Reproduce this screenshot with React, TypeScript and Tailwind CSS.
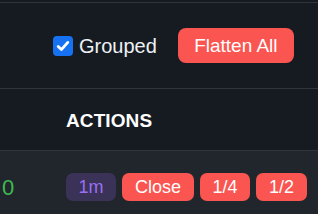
import React from "react";

export default function App() {
  return (
    <div
      className="w-[318px] h-[214px] overflow-hidden bg-[#161b22] flex flex-col"
      style={{ fontFamily: '"Liberation Sans", Arial, sans-serif' }}
    >
      <div className="h-[2px] bg-[#161b22] shrink-0" />
      <div className="h-[87px] shrink-0 border-t border-b border-[#30363d] flex items-center">
        <div className="w-[53px] shrink-0" />
        <label className="flex items-center gap-[6px]">
          <span className="w-[20px] h-[20px] rounded-[4px] bg-[#1672f3] flex items-center justify-center">
            <svg width="16" height="16" viewBox="0 0 16 16">
              <path
                d="M3.2 8.4 L6.4 11.6 L12.8 4.4"
                fill="none"
                stroke="#ffffff"
                strokeWidth="2.8"
                strokeLinecap="round"
                strokeLinejoin="round"
              />
            </svg>
          </span>
          <span className="text-[20px] leading-none text-[#eef2f6]">Grouped</span>
        </label>
        <button className="ml-[21px] w-[116px] h-[35px] rounded-[8px] bg-[#fa5550] text-white text-[19px] leading-none flex items-center justify-center">
          Flatten All
        </button>
      </div>
      <div className="h-[62px] shrink-0 flex items-center border-b border-[#30363d]">
        <div className="w-[66px] shrink-0" />
        <span className="text-[19px] leading-none font-bold text-white tracking-[0.1px] pt-[2px]">ACTIONS</span>
      </div>
      <div className="flex-1 bg-[#21262d] flex items-start pt-[22px]">
        <div className="w-[66px] shrink-0 h-[28px] flex items-center pl-[2px] pt-[2px]">
          <span className="text-[22px] leading-none text-[#3fb950]">0</span>
        </div>
        <div className="flex gap-[6px]">
          <button className="w-[50px] h-[28px] rounded-[7px] bg-[#3a3257] text-[#9b6ff2] text-[18px] leading-none flex items-center justify-center">
            1m
          </button>
          <button className="w-[72px] h-[28px] rounded-[7px] bg-[#fa5550] text-white text-[18px] leading-none flex items-center justify-center">
            Close
          </button>
          <button className="w-[50px] h-[28px] rounded-[7px] bg-[#fa5550] text-white text-[18px] leading-none flex items-center justify-center">
            1/4
          </button>
          <button className="w-[51px] h-[28px] rounded-[7px] bg-[#fa5550] text-white text-[18px] leading-none flex items-center justify-center">
            1/2
          </button>
        </div>
      </div>
    </div>
  );
}
